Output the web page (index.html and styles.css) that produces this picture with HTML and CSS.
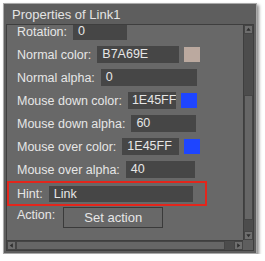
FILE: index.html
```html
<!DOCTYPE html>
<html>
<head>
<meta charset="utf-8">
<link rel="stylesheet" href="styles.css">
</head>
<body>
<div class="window">
  <div class="title">Properties of Link1</div>
  <div class="frame">
    <div class="viewport">
      <div class="rows">
        <div class="row"><span class="lbl">Rotation:</span><span class="field w54">0</span></div>
        <div class="row"><span class="lbl">Normal color:</span><span class="field w82">B7A69E</span><span class="swatch sw-beige"></span></div>
        <div class="row"><span class="lbl">Normal alpha:</span><span class="field w96">0</span></div>
        <div class="row"><span class="lbl">Mouse down color:</span><span class="field w47">1E45FF</span><span class="swatch sw-blue"></span></div>
        <div class="row"><span class="lbl">Mouse down alpha:</span><span class="field w65">60</span></div>
        <div class="row"><span class="lbl">Mouse over color:</span><span class="field w57">1E45FF</span><span class="swatch sw-blue"></span></div>
        <div class="row"><span class="lbl">Mouse over alpha:</span><span class="field w69">40</span></div>
        <div class="row hint"><span class="lbl">Hint:</span><span class="field w144">Link</span></div>
        <div class="row action"><span class="lbl">Action:</span><span class="btn">Set action</span></div>
      </div>
    </div>
    <div class="vscroll">
      <span class="arrow"><svg width="8" height="8" viewBox="0 0 8 8"><path d="M4 2 L6.5 5.5 L1.5 5.5 Z" fill="#2e2e2e"/></svg></span>
      <span class="vthumb-gap1"></span>
      <span class="vthumb"></span>
      <span class="vtrack"></span>
      <span class="arrow"><svg width="8" height="8" viewBox="0 0 8 8"><path d="M4 6 L6.5 2.5 L1.5 2.5 Z" fill="#2e2e2e"/></svg></span>
    </div>
    <div class="hscroll">
      <span class="arrow"><svg width="8" height="8" viewBox="0 0 8 8"><path d="M2 4 L5.5 1.5 L5.5 6.5 Z" fill="#2e2e2e"/></svg></span>
      <span class="hthumb"></span>
      <span class="htrack"></span>
      <span class="arrow"><svg width="8" height="8" viewBox="0 0 8 8"><path d="M6 4 L2.5 1.5 L2.5 6.5 Z" fill="#2e2e2e"/></svg></span>
    </div>
    <div class="corner"></div>
  </div>
</div>
</body>
</html>
```

FILE: styles.css
```css
html, body {
  margin: 0;
  padding: 0;
  background: #ffffff;
}
body {
  font-family: "Liberation Sans", Arial, sans-serif;
  font-size: 12.5px;
  color: #e6e6e6;
}
.window {
  margin: 3px 0 0 3px;
  width: 252px;
  height: 249px;
  border: 1px solid #a9a9a9;
  background: #5e5e5e;
  box-shadow: 2px 2px 3px rgba(0, 0, 0, 0.45);
  display: flex;
  flex-direction: column;
}
.title {
  height: 20px;
  line-height: 21px;
  padding-left: 8px;
  font-size: 13px;
  color: #e4e4e4;
  flex: none;
}
.frame {
  flex: 1;
  margin: 0 2px 2px 2px;
  border: 1px solid #3e3e3e;
  background: #686868;
  display: grid;
  grid-template-columns: 1fr 10px;
  grid-template-rows: 1fr 10px;
  min-height: 0;
}
.viewport {
  overflow: hidden;
  min-height: 0;
}
.rows {
  margin-top: -5px;
  padding-left: 3px;
  display: flex;
  flex-direction: column;
}
.row {
  height: 23px;
  display: flex;
  align-items: center;
  padding-left: 7px;
}
.lbl {
  margin-right: 6px;
  white-space: nowrap;
}
.field {
  height: 17px;
  line-height: 17px;
  background: #464646;
  padding-left: 5px;
  box-sizing: border-box;
  color: #e6e6e6;
  white-space: nowrap;
  overflow: hidden;
}
.w54 { width: 54px; }
.w82 { width: 82px; }
.w96 { width: 96px; }
.w47 { width: 48px; padding-left: 4px; }
.w65 { width: 65px; }
.w57 { width: 57px; }
.w69 { width: 69px; }
.w144 { width: 144px; height: 16px; line-height: 16px; }
.swatch {
  width: 16px;
  height: 15px;
  margin-left: 5px;
}
.sw-beige { background: #bba99f; }
.sw-blue { background: #1e45ff; }
.hint {
  box-sizing: border-box;
  margin-left: -3px;
  padding-left: 8px;
  width: 200px;
  height: 25px;
  border: 2px solid #e3261c;
  margin-bottom: 1px;
}
.action {
  align-items: flex-start;
  height: 24px;
}
.action .lbl {
  margin-top: 1px;
  margin-right: 8px;
}
.btn {
  width: 100px;
  height: 21px;
  box-sizing: border-box;
  border: 1px solid #3a3a3a;
  text-align: center;
  line-height: 19px;
  font-size: 13px;
  color: #e6e6e6;
}
.vscroll {
  grid-column: 2;
  grid-row: 1;
  display: flex;
  flex-direction: column;
  background: #4c4c4c;
  border-left: 1px solid #3e3e3e;
}
.arrow {
  flex: none;
  width: 100%;
  height: 9px;
  background: #6e6e6e;
  border: 1px solid #454545;
  box-sizing: border-box;
  display: flex;
  align-items: center;
  justify-content: center;
}
.arrow svg { display: block; width: 7px; height: 7px; }
.vthumb-gap1 { height: 61px; flex: none; }
.vthumb {
  height: 125px;
  flex: none;
  background: #666666;
  border: 1px solid #454545;
  box-sizing: border-box;
}
.vtrack { flex: 1; }
.hscroll {
  grid-column: 1;
  grid-row: 2;
  display: flex;
  background: #4c4c4c;
  border-top: 1px solid #3e3e3e;
}
.hscroll .arrow { width: 9px; height: 100%; }
.hthumb {
  width: 209px;
  flex: none;
  background: #666666;
  border: 1px solid #454545;
  box-sizing: border-box;
}
.htrack { flex: 1; }
.corner {
  grid-column: 2;
  grid-row: 2;
  background: #5e5e5e;
}
```
